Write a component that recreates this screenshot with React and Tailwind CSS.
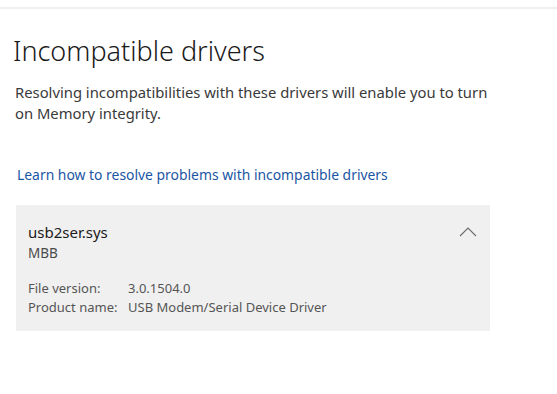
import React from 'react';

function DriverCard() {
  return (
    <div className="ml-4 mt-[20px] w-[474px] h-[126px] bg-[#f0f0f0] px-3 pt-[17px] relative">
      <div className="text-[15px] leading-5 text-[#1b1b1b]">usb2ser.sys</div>
      <div className="text-[13.5px] leading-5 text-[#4a4a4a] mt-[1px]">MBB</div>
      <div className="mt-[16px] grid grid-cols-[100px_1fr] text-[13px] leading-[19px] text-[#555]">
        <span>File version:</span>
        <span>3.0.1504.0</span>
        <span>Product name:</span>
        <span>USB Modem/Serial Device Driver</span>
      </div>
      <svg className="absolute right-[13px] top-[21px]" width="18" height="12" viewBox="0 0 18 12">
        <path d="M1 10 L9 2 L17 10" fill="none" stroke="#6b6b6b" strokeWidth="1.1" />
      </svg>
    </div>
  );
}

export default function App() {
  return (
    <div className="w-[557px] h-[394px] bg-white overflow-hidden" style={{ fontFamily: '"Noto Sans", "Open Sans", sans-serif' }}>
      <div className="h-[7px]" />
      <div className="h-[2px] bg-[#efefef]" />
      <h1 className="ml-[13px] mt-[24px] text-[27px] leading-9 font-light text-[#1a1a1a]">Incompatible drivers</h1>
      <p className="ml-[15px] mt-[13px] w-[480px] text-[14.8px] leading-[21px] text-[#3a3a3a]">
        Resolving incompatibilities with these drivers will enable you to turn on Memory integrity.
      </p>
      <a href="#" className="block ml-[17px] mt-[41px] text-[13.9px] leading-5 text-[#1b56a3]">
        Learn how to resolve problems with incompatible drivers
      </a>
      <DriverCard />
    </div>
  );
}
